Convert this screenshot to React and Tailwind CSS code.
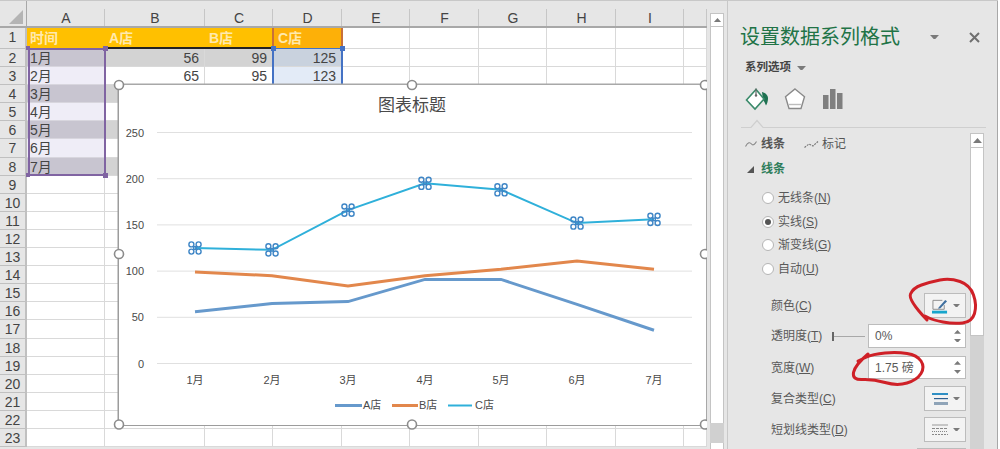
import React from 'react';

const COLS = ['A', 'B', 'C', 'D', 'E', 'F', 'G', 'H', 'I', ''];
const MONTHS = ['1月', '2月', '3月', '4月', '5月', '6月', '7月'];
const SERIES_A = [56, 65, 67, 91, 91, 64, 36];
const SERIES_B = [99, 95, 84, 95, 102, 111, 102];
const SERIES_C = [125, 123, 166, 195, 188, 152, 156];
const CHART_X = [195, 272, 348, 425, 501, 577, 654];
const toY = (v) => 363.5 - v * 0.924;
const linePoints = (vals) => vals.map((v, i) => `${CHART_X[i]},${toY(v)}`).join(' ');

function smooth(pts) {
  let d = `M${pts[0][0]} ${pts[0][1]}`;
  for (let i = 1; i < pts.length - 1; i++) {
    const mx = (pts[i][0] + pts[i + 1][0]) / 2;
    const my = (pts[i][1] + pts[i + 1][1]) / 2;
    d += ` Q${pts[i][0]} ${pts[i][1]} ${mx} ${my}`;
  }
  const last = pts[pts.length - 1];
  return d + ` L${last[0]} ${last[1]}`;
}

function Tri({ up, className, w = 9 }) {
  return (
    <svg width={w} height={w * 0.55} viewBox="0 0 9 5" className={className}>
      <polygon points={up ? '4.5,0 9,5 0,5' : '0,0 9,0 4.5,5'} fill="#7a7a7a" />
    </svg>
  );
}

function DataCell({ row, col }) {
  const even = row % 2 === 0;
  if (col === 0) {
    return (
      <div className={`border-r border-b border-[#d8d6de] pl-[3px] text-[14px] leading-[18px] text-[#444] ${even ? 'bg-[#c8c5d0]' : 'bg-[#efedf7]'}`}>
        {MONTHS[row]}
      </div>
    );
  }
  const val = [SERIES_A, SERIES_B, SERIES_C][col - 1][row];
  if (col === 3) {
    return (
      <div className={`border-r border-b border-[#d9d9d9] pr-[5px] text-right text-[14px] leading-[18px] text-[#444] ${even ? 'bg-[#c9d2de]' : 'bg-[#e3ebf7]'}`}>
        {val}
      </div>
    );
  }
  return (
    <div className={`border-r border-b border-[#d9d9d9] pr-[5px] text-right text-[14px] leading-[18px] text-[#444] ${even ? 'bg-[#d3d3d3]' : 'bg-white'}`}>
      {val}
    </div>
  );
}

function Sheet() {
  const rows = Array.from({ length: 23 }, (_, i) => i + 1);
  return (
    <div className="relative w-[707px] shrink-0 overflow-hidden">
      <div className="grid grid-cols-[27px_78px_100px_68px_69px_68px_69px_68px_69px_68px_23px] grid-rows-[28px_21px_repeat(22,18.1px)]">
        <div className="relative border-r border-b-2 border-[#a8a8a8] bg-[#e6e6e6]">
          <svg width="14" height="14" viewBox="0 0 14 14" className="absolute right-[3px] bottom-[2px]">
            <polygon points="14,0 14,14 0,14" fill="#b4b4b4" />
          </svg>
        </div>
        {COLS.map((c, i) => (
          <div key={i} className="border-b-2 border-[#a8a8a8] bg-[#e6e6e6] pt-[9px]">
            <div className="h-full border-r border-[#c6c6c6] pl-[1px] text-center text-[14px] leading-[19px] text-[#444]">{c}</div>
          </div>
        ))}

        {rows.map((r) => (
          <React.Fragment key={r}>
            <div className="border-r-2 border-b border-[#c0c0c0] bg-[#e6e6e6] text-center text-[14px] leading-[19px] text-[#444]">{r}</div>
            {r === 1 && (
              <>
                <div className="bg-[#ffc000] pl-[3px] text-[14px] leading-[21px] font-bold text-[#ffe9ad]">时间</div>
                <div className="bg-[#ffc000] pl-[4px] text-[14px] leading-[21px] font-bold text-[#ffe9ad]">A店</div>
                <div className="bg-[#ffc000] pl-[4px] text-[14px] leading-[21px] font-bold text-[#ffe9ad]">B店</div>
                <div className="bg-[#fdb008] pl-[5px] text-[14px] leading-[21px] font-bold text-[#ffe9ad]">C店</div>
              </>
            )}
            {r >= 2 && r <= 8 && [0, 1, 2, 3].map((c) => <DataCell key={c} row={r - 2} col={c} />)}
            {r > 8 && [0, 1, 2, 3].map((c) => <div key={c} className="border-r border-b border-[#d9d9d9] bg-white" />)}
            {[4, 5, 6, 7, 8, 9].map((c) => (
              <div key={c} className="border-r border-b border-[#d9d9d9] bg-white" />
            ))}
          </React.Fragment>
        ))}
      </div>

      {/* range selection outlines */}
      <div className="absolute top-[48px] left-[28px] h-[128px] w-[78px] border-2 border-[#8064a2]" />
      <div className="absolute top-[47px] left-[107px] h-[2px] w-[166px] bg-[#222]" />
      <div className="absolute top-[28px] left-[272px] h-[21px] w-[71px] border-x-2 border-[#c8703a]" />
      <div className="absolute top-[48px] left-[272px] h-[40px] w-[71px] border-x-2 border-t border-[#4472c4]" />
      <div className="absolute top-[46px] left-[26px] size-[4px] bg-[#8064a2]" />
      <div className="absolute top-[46px] left-[103px] size-[5px] bg-[#8064a2]" />
      <div className="absolute top-[173px] left-[26px] size-[4px] bg-[#8064a2]" />
      <div className="absolute top-[173px] left-[103px] size-[5px] bg-[#8064a2]" />
      <div className="absolute top-[46px] left-[271px] size-[5px] bg-[#4472c4]" />
      <div className="absolute top-[46px] left-[340px] size-[5px] bg-[#4472c4]" />

      <Chart />
    </div>
  );
}

function Marker({ x, y }) {
  return (
    <g fill="none" stroke="#3f86c6" strokeWidth="1.4">
      <circle cx={x - 3.6} cy={y - 3.6} r="2.5" />
      <circle cx={x + 3.6} cy={y - 3.6} r="2.5" />
      <circle cx={x - 3.6} cy={y + 3.6} r="2.5" />
      <circle cx={x + 3.6} cy={y + 3.6} r="2.5" />
      <rect x={x - 1.3} y={y - 1.3} width="2.6" height="2.6" />
    </g>
  );
}

function Chart() {
  const handles = [
    [119, 85], [412, 85], [705, 85],
    [119, 254], [705, 254],
    [119, 424.5], [412, 424.5], [705, 424.5],
  ];
  return (
    <div className="absolute top-[85px] left-[119px] h-[340px] w-[587px] bg-white shadow-[0_-1.5px_0_0_#a8a8a8,-1.5px_0_0_0_#9c9c9c,1.5px_0_0_0_#a8a8a8,0_1px_0_0_#9c9c9c]">
      <svg width="587" height="340" viewBox="119 85 587 340" className="block overflow-visible">
        <text x="412" y="111" textAnchor="middle" fill="#4a4a4a" className="text-[17px]">图表标题</text>
        {[0, 50, 100, 150, 200, 250].map((v) => (
          <g key={v}>
            <line x1="157" x2="692" y1={toY(v)} y2={toY(v)} stroke="#e0e0e0" />
            <text x="144" y={toY(v) + 4} textAnchor="end" fill="#4a4a4a" className="text-[11px]">{v}</text>
          </g>
        ))}
        {MONTHS.map((m, i) => (
          <text key={m} x={CHART_X[i]} y="384" textAnchor="middle" fill="#4a4a4a" className="text-[11px]">{m}</text>
        ))}
        <polyline points={linePoints(SERIES_A)} fill="none" stroke="#6699cc" strokeWidth="3" />
        <polyline points={linePoints(SERIES_B)} fill="none" stroke="#e2874c" strokeWidth="3" />
        <polyline points={linePoints(SERIES_C)} fill="none" stroke="#2fb0da" strokeWidth="2" />
        {SERIES_C.map((v, i) => (
          <Marker key={i} x={CHART_X[i]} y={toY(v)} />
        ))}

        <line x1="335" x2="362" y1="405.5" y2="405.5" stroke="#6699cc" strokeWidth="3" />
        <text x="363" y="409" fill="#4a4a4a" className="text-[11px]">A店</text>
        <line x1="392" x2="418" y1="405.5" y2="405.5" stroke="#e2874c" strokeWidth="3" />
        <text x="419" y="409" fill="#4a4a4a" className="text-[11px]">B店</text>
        <line x1="448" x2="472" y1="405.5" y2="405.5" stroke="#2fb0da" strokeWidth="2" />
        <text x="475" y="409" fill="#4a4a4a" className="text-[11px]">C店</text>

        {handles.map(([x, y]) => (
          <circle key={`${x}-${y}`} cx={x} cy={y} r="4.5" fill="#fff" stroke="#8c8c8c" strokeWidth="1.6" />
        ))}
      </svg>
    </div>
  );
}

function SheetScroll() {
  return (
    <div className="ml-[3px] flex w-[14px] shrink-0 flex-col pt-[13px]">
      <div className="flex h-[410px] flex-col border-x border-[#c4c4c4] bg-white">
        <div className="flex h-[14px] items-center justify-center border border-x-0 border-[#c4c4c4]">
          <Tri up />
        </div>
      </div>
      <div className="h-[20px] bg-[#d0d0d0]" />
      <div className="flex-1 border-x border-[#c4c4c4] bg-white" />
    </div>
  );
}

function BucketIcon() {
  return (
    <svg width="24" height="24" viewBox="0 0 24 24">
      <path d="M17 5 C21 6 23.5 9 23 12 C22.8 15 22 17 21 18.5 C20 16.5 19.5 14.5 18 13 Z" fill="#1f7252" />
      <polygon points="1.5,13 11,2.5 19,12 10,22" fill="#fff" stroke="#3a8a6a" strokeWidth="1.6" />
      <path d="M11 1.5 V8" stroke="#666" strokeWidth="1.2" fill="none" />
      <circle cx="11" cy="8.5" r="1.2" fill="#666" />
    </svg>
  );
}

function PentagonIcon() {
  return (
    <svg width="24" height="24" viewBox="0 0 24 24">
      <polygon points="12,2 21.5,9.7 18,21.5 6,21.5 2.5,9.7" fill="#fff" stroke="#8a8a8a" strokeWidth="1.4" />
      <path d="M6 17.5 H18" stroke="#bdbdbd" strokeWidth="1.4" />
    </svg>
  );
}

function BarsIcon() {
  return (
    <svg width="20" height="20" viewBox="0 0 20 20">
      <rect x="0" y="6" width="5.5" height="14" fill="#7f7f7f" />
      <rect x="7" y="0" width="5.5" height="20" fill="#7f7f7f" />
      <rect x="14" y="4" width="5.5" height="16" fill="#7f7f7f" />
    </svg>
  );
}

function Radio({ label, hint, checked }) {
  return (
    <div className="flex h-[23.5px] items-center pl-[21px] text-[12px] text-[#595959]">
      <span className="flex size-[12px] items-center justify-center rounded-full border border-[#b5b5b5] bg-white">
        {checked && <span className="size-[6px] rounded-full bg-[#555]" />}
      </span>
      <span className="ml-[4px]">{label}(<span className="underline">{hint}</span>)</span>
    </div>
  );
}

function FormLabel({ label, hint }) {
  return (
    <span className="text-[12px] whitespace-nowrap text-[#595959]">
      {label}(<span className="underline">{hint}</span>)
    </span>
  );
}

function DropBtn({ children }) {
  return (
    <div className="flex h-full w-[42px] items-center justify-between border border-[#bcbcbc] bg-[#f3f3f3] pr-[5px] pl-[7px]">
      {children}
      <Tri w={7} />
    </div>
  );
}

function SpinInput({ value }) {
  return (
    <div className="ml-auto flex h-full w-[98px] items-center justify-between border border-[#bcbcbc] bg-white pr-[4px] pl-[6px] text-[12px] text-[#595959]">
      <span>{value}</span>
      <div className="flex flex-col gap-[5px]">
        <Tri up w={7} />
        <Tri w={7} />
      </div>
    </div>
  );
}

function FormatPane() {
  return (
    <div className="ml-[3px] flex w-[271px] shrink-0 flex-col border-x border-r-[#a8a8a8] border-l-[#c8c8c8] pt-[22px] pl-[13px]">
      <div className="flex h-[30px] items-center">
        <span className="-ml-[1px] text-[20px] leading-[30px] text-[#217346]">设置数据系列格式</span>
        <Tri className="ml-[30px]" />
        <svg width="11" height="11" viewBox="0 0 11 11" className="ml-[30px]">
          <path d="M1 1 L10 10 M10 1 L1 10" stroke="#6f6f6f" strokeWidth="2" />
        </svg>
      </div>

      <div className="mt-[8px] flex h-[16px] items-center pl-[4px] text-[11.5px] font-bold text-[#444]">
        系列选项
        <Tri className="ml-[6px]" />
      </div>

      <div className="mt-[11px] flex h-[24px] items-center pl-[4px]">
        <BucketIcon />
        <span className="ml-[14px]"><PentagonIcon /></span>
        <span className="ml-[16px]"><BarsIcon /></span>
      </div>

      <svg width="245" height="10" viewBox="0 0 245 10" className="mt-[8px] block shrink-0">
        <path d="M0 8.5 H10 L16 1.5 L22 8.5 H245" fill="none" stroke="#cfcfcf" strokeWidth="1.2" />
      </svg>

      <div className="flex flex-1">
        <div className="w-[229px] shrink-0">
          <div className="mt-[7px] flex h-[16px] items-center pl-[4px] text-[12px] text-[#555]">
            <svg width="12" height="8" viewBox="0 0 12 8">
              <path d="M0.5 6.5 C3 2 5 2 6.5 4 C8 6 10 4 11.5 1.5" fill="none" stroke="#888" strokeWidth="1.1" />
            </svg>
            <span className="ml-[4px] font-bold">线条</span>
            <svg width="15" height="9" viewBox="0 0 15 9" className="ml-[19px]">
              <path d="M0.5 7.5 L5 4 L9 6 L14 1.5" fill="none" stroke="#777" strokeWidth="1.1" strokeDasharray="2 1" />
            </svg>
            <span className="ml-[3px]">标记</span>
          </div>

          <div className="mt-[9px] flex h-[16px] items-center pl-[6px]">
            <svg width="7" height="7" viewBox="0 0 7 7"><polygon points="7,0 7,7 0,7" fill="#555" /></svg>
            <span className="ml-[7px] text-[12px] font-bold text-[#2d7d5a]">线条</span>
          </div>

          <div className="mt-[9.5px]">
            <Radio label="无线条" hint="N" />
            <Radio label="实线" hint="S" checked />
            <Radio label="渐变线" hint="G" />
            <Radio label="自动" hint="U" />
          </div>

          <div className="mt-[12.5px] flex flex-col pr-[4px] pl-[30px]">
            <div className="flex h-[25px] items-center justify-between">
              <FormLabel label="颜色" hint="C" />
              <DropBtn>
                <svg width="16" height="16" viewBox="0 0 17 16">
                  <path d="M11 2 H1 V11.5 H13 V7" fill="none" stroke="#8a8a8a" />
                  <path d="M7 9.5 L14 1.5 L16 3 L9 10.5 L6.5 11 Z" fill="#3f6f9f" />
                  <rect x="0" y="13" width="16" height="3" fill="#17a5cc" />
                </svg>
              </DropBtn>
            </div>
            <div className="mt-[6px] flex h-[24px] items-center">
              <FormLabel label="透明度" hint="T" />
              <div className="ml-[10px] h-[9px] w-[1.5px] bg-[#666]" />
              <div className="h-px w-[31px] bg-[#a8a8a8]" />
              <SpinInput value="0%" />
            </div>
            <div className="mt-[8px] flex h-[23px] items-center">
              <FormLabel label="宽度" hint="W" />
              <SpinInput value="1.75 磅" />
            </div>
            <div className="mt-[7px] flex h-[25px] items-center justify-between">
              <FormLabel label="复合类型" hint="C" />
              <DropBtn>
                <svg width="16" height="12" viewBox="0 0 16 12">
                  <rect x="0" y="0" width="16" height="2" fill="#2f8fc4" />
                  <rect x="2" y="5" width="14" height="1.2" fill="#2f5f8f" />
                  <rect x="2" y="9" width="14" height="3" fill="#8fa4b8" />
                </svg>
              </DropBtn>
            </div>
            <div className="mt-[6px] flex h-[25px] items-center justify-between">
              <FormLabel label="短划线类型" hint="D" />
              <DropBtn>
                <svg width="16" height="11" viewBox="0 0 16 11">
                  <path d="M0 1 H16" stroke="#999" />
                  <path d="M0 4.5 H16" stroke="#888" strokeDasharray="3 1" />
                  <path d="M0 7.5 H16" stroke="#888" strokeDasharray="1 1" />
                  <path d="M0 10.5 H16" stroke="#888" strokeDasharray="2 1" />
                </svg>
              </DropBtn>
            </div>
            <div className="mt-[6px] ml-auto h-[6px] w-[49px] border border-[#bcbcbc] bg-[#f3f3f3]" />
          </div>
        </div>

        <div className="mt-[4px] flex w-[14px] shrink-0 flex-col">
          <div className="flex h-[203px] flex-col border border-[#c4c4c4] bg-white">
            <div className="flex h-[14px] items-center justify-center border-b border-[#c4c4c4]">
              <Tri up />
            </div>
          </div>
          <div className="flex-1 bg-[#d2d2d2]" />
        </div>
      </div>
    </div>
  );
}

export default function App() {
  const circleA = [[927, 320], [908, 300], [913, 288], [930, 282], [950, 278], [970, 285], [977, 305], [972, 322], [953, 324], [933, 320], [925, 316]];
  const circleB = [[868, 354], [855, 365], [852, 380], [873, 379], [897, 386], [917, 380], [925, 367], [917, 355], [897, 352], [873, 354], [858, 361]];
  return (
    <div className="relative flex h-[449px] w-[1000px] overflow-hidden bg-[#e6e6e6] [font-family:'Liberation_Sans','Noto_Sans_CJK_SC',sans-serif]">
      <Sheet />
      <SheetScroll />
      <FormatPane />
      <div className="flex-1 bg-white" />

      {/* top edge of the window behind the sheet */}
      <div className="absolute top-0 left-0 h-px w-[998px] bg-[#c8c8c8]" />

      {/* hand drawn red circles over the pane */}
      <svg width="1000" height="449" viewBox="0 0 1000 449" className="pointer-events-none absolute top-0 left-0">
        <path d={smooth(circleA)} fill="none" stroke="#cf2027" strokeWidth="3" strokeLinecap="round" />
        <path d={smooth(circleB)} fill="none" stroke="#cf2027" strokeWidth="3" strokeLinecap="round" />
      </svg>
    </div>
  );
}
